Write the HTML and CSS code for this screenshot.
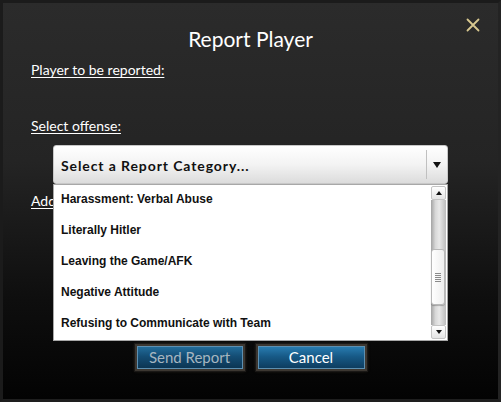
FILE: index.html
```html
<!DOCTYPE html>
<html>
<head>
<meta charset="utf-8">
<link rel="stylesheet" href="styles.css">
</head>
<body>
<div class="dialog">
  <button class="close" aria-label="Close">
    <svg width="14" height="14" viewBox="0 0 14 14"><path d="M1.5 1.5 L12.5 12.5 M12.5 1.5 L1.5 12.5" stroke="#d8c890" stroke-width="1.8" stroke-linecap="round"/></svg>
  </button>
  <h1 class="title">Report Player</h1>
  <div class="label l1">Player to be reported:</div>
  <div class="label l2">Select offense:</div>
  <div class="select-wrap">
    <div class="select">
      <span class="select-text">Select a Report Category...</span>
      <span class="select-btn"><span class="tri-down big"></span></span>
    </div>
    <div class="listbox">
      <ul class="items">
        <li>Harassment: Verbal Abuse</li>
        <li>Literally Hitler</li>
        <li>Leaving the Game/AFK</li>
        <li>Negative Attitude</li>
        <li>Refusing to Communicate with Team</li>
      </ul>
      <div class="scrollbar">
        <div class="sb-btn"><span class="tri-up"></span></div>
        <div class="sb-track">
          <div class="sb-thumb"><span class="grip"></span></div>
        </div>
        <div class="sb-btn"><span class="tri-down"></span></div>
      </div>
    </div>
  </div>
  <div class="label l3">Additional comments:</div>
  <div class="spacer"></div>
  <div class="buttons">
    <button class="btn disabled">Send Report</button>
    <button class="btn">Cancel</button>
  </div>
</div>
</body>
</html>
```

FILE: styles.css
```css
html, body {
  margin: 0;
  padding: 0;
  background: #151515;
}
.dialog {
  position: relative;
  box-sizing: border-box;
  width: 501px;
  height: 402px;
  border: 3px solid #1b1b1b;
  border-right-color: #232323;
  border-bottom-color: #1e1e1e;
  background: linear-gradient(to bottom, #2b2b2b 0%, #242424 40%, #0e0e0e 75%, #030303 100%);
  display: flex;
  flex-direction: column;
  padding: 0 0 0 28px;
  font-family: "Lato", "Open Sans", sans-serif;
  color: #fff;
}
.close {
  position: absolute;
  right: 18px;
  top: 15px;
  background: none;
  border: 0;
  padding: 0;
  width: 14px;
  height: 14px;
  display: block;
}
.close svg { display: block; }
.title {
  margin: 23px 0 0 -28px;
  font-weight: 400;
  font-size: 21px;
  line-height: 26px;
  text-align: center;
  color: #fff;
}
.label {
  font-size: 14px;
  line-height: 18px;
  text-decoration: underline;
  text-underline-offset: 2px;
  color: #fff;
  align-self: flex-start;
}
.l1 { margin-top: 9px; }
.l2 { margin-top: 38px; }
.select-wrap {
  position: relative;
  margin: 10px 0 0 22px;
  width: 395px;
}
.select {
  box-sizing: border-box;
  height: 39px;
  border: 1px solid #c8c8c8;
  border-radius: 3px;
  background: linear-gradient(to bottom, #ffffff 0%, #f3f3f3 50%, #dcdcdc 100%);
  display: flex;
  align-items: center;
  color: #111;
}
.select-text {
  flex: 1;
  padding-left: 7px;
  padding-top: 1px;
  font-family: "Lato", "Open Sans", sans-serif;
  font-weight: 700;
  font-size: 14px;
  letter-spacing: 0.9px;
}
.select-btn {
  width: 20px;
  height: 29px;
  border-left: 1px solid #c0c0c0;
  display: flex;
  align-items: center;
  justify-content: center;
}
.tri-down, .tri-up {
  display: block;
  width: 0;
  height: 0;
  border-left: 3px solid transparent;
  border-right: 3px solid transparent;
}
.tri-down { border-top: 4px solid #111; }
.tri-up { border-bottom: 4px solid #111; }
.tri-down.big {
  border-left-width: 4px;
  border-right-width: 4px;
  border-top-width: 6px;
}
.listbox {
  position: absolute;
  left: 0;
  top: 39px;
  width: 395px;
  height: 157px;
  box-sizing: border-box;
  border: 1px solid #a8a8a8;
  background: #fff;
  display: flex;
  z-index: 2;
}
.items {
  flex: 1;
  list-style: none;
  margin: 0;
  padding: 0 0 0 7px;
  font-family: "Liberation Sans", Arial, sans-serif;
  font-weight: 700;
  font-size: 12px;
  color: #111;
}
.items li {
  height: 31px;
  line-height: 31px;
}
.items li:first-child { margin-top: -1px; }
.scrollbar {
  width: 15px;
  margin: 1px 1px 0 0;
  display: flex;
  flex-direction: column;
  height: 153px;
}
.sb-btn {
  height: 14px;
  box-sizing: border-box;
  border: 1px solid #c4c4c4;
  border-radius: 2px;
  background: linear-gradient(to bottom, #ffffff, #e4e4e4);
  display: flex;
  align-items: center;
  justify-content: center;
}
.sb-track {
  flex: 1;
  background: linear-gradient(to right, #a4a4a4 0%, #d8d8d8 30%, #e8e8e8 55%, #bcbcbc 100%);
  position: relative;
  padding-top: 49px;
}
.sb-thumb {
  height: 56px;
  margin: 0 1px 0 0;
  box-sizing: border-box;
  border: 1px solid #b8b8b8;
  border-radius: 3px;
  background: linear-gradient(to right, #ffffff, #eeeeee);
  box-shadow: 0 1px 1px rgba(0,0,0,0.25);
  display: flex;
  align-items: center;
  justify-content: center;
}
.grip {
  display: block;
  width: 6px;
  height: 9px;
  background: repeating-linear-gradient(to bottom, #8a8a8a 0 1px, transparent 1px 2px);
}
.l3 { margin-top: 8px; }
.spacer { flex: 1; }
.buttons {
  display: flex;
  justify-content: center;
  gap: 11px;
  margin: 0 0 28px -28px;
}
.btn {
  box-sizing: border-box;
  width: 111px;
  height: 27px;
  padding: 0;
  border: 2px solid #3c3731;
  outline: 1px solid #1a1816;
  background: linear-gradient(to bottom, #2a7fb4 0%, #175a87 45%, #0d3a5c 100%);
  box-shadow: inset 0 0 0 1px #5d8fb0, 0 0 3px rgba(80,70,50,0.6);
  font-family: "Lato", "Open Sans", sans-serif;
  font-size: 15px;
  color: #fff;
  line-height: 21px;
}
.btn.disabled {
  width: 110px;
  color: #a6b6c0;
  background: linear-gradient(to bottom, #236f9e 0%, #144d74 45%, #0b3350 100%);
}
```
